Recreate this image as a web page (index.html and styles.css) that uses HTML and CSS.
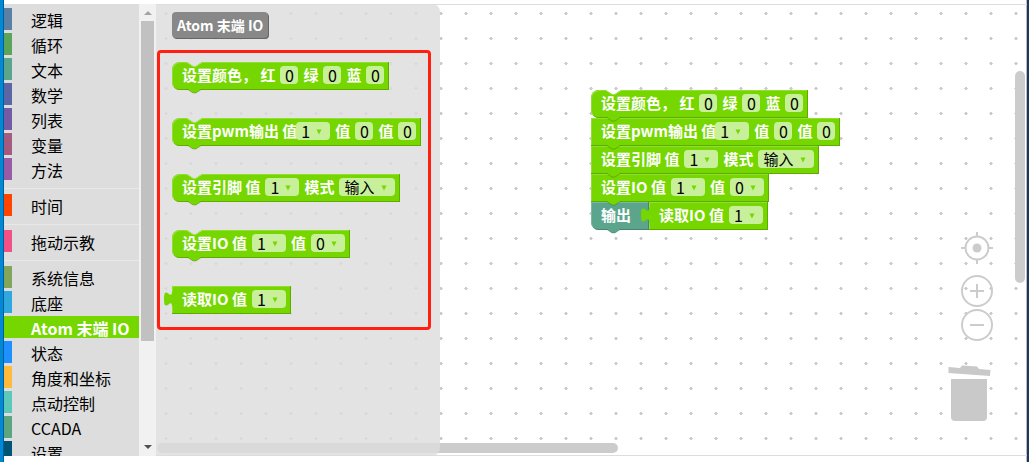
FILE: index.html
```html
<!DOCTYPE html>
<html lang="zh-CN">
<head>
<meta charset="utf-8">
<title>Atom 末端 IO</title>
<link rel="stylesheet" href="styles.css">
</head>
<body>
<svg class="defs" aria-hidden="true">
  <symbol id="notch" viewBox="0 0 16 5"><path class="notch-fill" d="M0 0H15L9 4H6Z"/><path class="notch-line" d="M0 .5L6 4.5H9L15 .5"/></symbol>
  <symbol id="tab" viewBox="0 0 16 5"><path d="M0 0H15L9 4H6Z" fill="currentColor"/><path d="M0 0L6 4H9L15 0" fill="none" stroke="#000" stroke-opacity=".2"/></symbol>
  <symbol id="plug" viewBox="0 0 9 16"><path d="M9 15.500H8c0-10-8 8-8-7.500s8 2.500 8-7.500H9Z" fill="currentColor"/></symbol>
  <symbol id="caret" viewBox="0 0 6 6"><path d="M.5 .5H5.500L3 5.500Z" fill="currentColor"/></symbol>
</svg>
<div class="window">
  <nav class="toolbox" aria-label="工具箱">
    <div class="categories">
      <button class="category logic">逻辑</button>
      <button class="category loops">循环</button>
      <button class="category text">文本</button>
      <button class="category math">数学</button>
      <button class="category lists">列表</button>
      <button class="category variables">变量</button>
      <button class="category methods">方法</button>
      <hr class="separator">
      <button class="category time">时间</button>
      <hr class="separator">
      <button class="category teach">拖动示教</button>
      <hr class="separator">
      <button class="category system">系统信息</button>
      <button class="category base">底座</button>
      <button class="category selected">Atom 末端 IO</button>
      <button class="category state">状态</button>
      <button class="category angles">角度和坐标</button>
      <button class="category jog">点动控制</button>
      <button class="category ccada">CCADA</button>
      <button class="category settings">设置</button>
    </div>
    <div class="track">
      <svg class="arrow up" viewBox="0 0 8 4"><path d="M0 4H8L4 0Z" fill="currentColor"/></svg>
      <div class="thumb"></div>
      <svg class="arrow" viewBox="0 0 8 4"><path d="M0 0H8L4 4Z" fill="currentColor"/></svg>
    </div>
  </nav>
  <main class="workspace">
    <svg class="grid" aria-hidden="true">
      <defs><pattern id="dots" width="25" height="25" patternUnits="userSpaceOnUse">
        <path d="M8 8h4v1h-4z" fill="#d4d4d4"/><path d="M9 7h2v3h-2z" fill="#ccc"/>
      </pattern></defs>
      <rect width="100%" height="100%" fill="url(#dots)"/>
    </svg>
    <div class="scroll-x"></div>
    <div class="scroll-y"></div>

    <section class="stack" aria-label="程序">
      <div class="block first">
        <svg class="notch"><use href="#notch"/></svg>
        <span class="label">设置颜色， 红</span><input class="field" aria-label="红" value="0">
        <span class="label">绿</span><input class="field" aria-label="绿" value="0">
        <span class="label">蓝</span><input class="field" aria-label="蓝" value="0">
        <svg class="tab"><use href="#tab"/></svg>
      </div>
      <div class="block">
        <span class="label tight">设置pwm输出 值</span><span class="drop"><select aria-label="引脚"><option>1</option></select><svg class="caret"><use href="#caret"/></svg></span>
        <span class="label">值</span><input class="field" aria-label="值一" value="0">
        <span class="label">值</span><input class="field" aria-label="值二" value="0">
        <svg class="tab"><use href="#tab"/></svg>
      </div>
      <div class="block">
        <span class="label">设置引脚 值</span><span class="drop"><select aria-label="引脚"><option>1</option></select><svg class="caret"><use href="#caret"/></svg></span>
        <span class="label">模式</span><span class="drop wide"><select aria-label="模式"><option>输入</option></select><svg class="caret"><use href="#caret"/></svg></span>
        <svg class="tab"><use href="#tab"/></svg>
      </div>
      <div class="block">
        <span class="label">设置IO 值</span><span class="drop"><select aria-label="引脚"><option>1</option></select><svg class="caret"><use href="#caret"/></svg></span>
        <span class="label">值</span><span class="drop"><select aria-label="值"><option>0</option></select><svg class="caret"><use href="#caret"/></svg></span>
        <svg class="tab"><use href="#tab"/></svg>
      </div>
      <div class="joined">
        <div class="block print">
          <span class="label">输出</span>
          <svg class="tab"><use href="#tab"/></svg>
        </div>
        <div class="block value">
          <svg class="plug"><use href="#plug"/></svg>
          <span class="label">读取IO 值</span><span class="drop"><select aria-label="引脚"><option>1</option></select><svg class="caret"><use href="#caret"/></svg></span>
        </div>
      </div>
    </section>

    <section class="flyout" aria-label="Atom 末端 IO">
      <button class="heading">Atom 末端 IO</button>
      <div class="highlight">
        <div class="block first">
          <svg class="notch"><use href="#notch"/></svg>
          <span class="label">设置颜色， 红</span><input class="field" aria-label="红" value="0">
          <span class="label">绿</span><input class="field" aria-label="绿" value="0">
          <span class="label">蓝</span><input class="field" aria-label="蓝" value="0">
          <svg class="tab"><use href="#tab"/></svg>
        </div>
        <div class="block first">
          <svg class="notch"><use href="#notch"/></svg>
          <span class="label tight">设置pwm输出 值</span><span class="drop"><select aria-label="引脚"><option>1</option></select><svg class="caret"><use href="#caret"/></svg></span>
          <span class="label">值</span><input class="field" aria-label="值一" value="0">
          <span class="label">值</span><input class="field" aria-label="值二" value="0">
          <svg class="tab"><use href="#tab"/></svg>
        </div>
        <div class="block first">
          <svg class="notch"><use href="#notch"/></svg>
          <span class="label">设置引脚 值</span><span class="drop"><select aria-label="引脚"><option>1</option></select><svg class="caret"><use href="#caret"/></svg></span>
          <span class="label">模式</span><span class="drop wide"><select aria-label="模式"><option>输入</option></select><svg class="caret"><use href="#caret"/></svg></span>
          <svg class="tab"><use href="#tab"/></svg>
        </div>
        <div class="block first">
          <svg class="notch"><use href="#notch"/></svg>
          <span class="label">设置IO 值</span><span class="drop"><select aria-label="引脚"><option>1</option></select><svg class="caret"><use href="#caret"/></svg></span>
          <span class="label">值</span><span class="drop"><select aria-label="值"><option>0</option></select><svg class="caret"><use href="#caret"/></svg></span>
          <svg class="tab"><use href="#tab"/></svg>
        </div>
        <div class="block value">
          <svg class="plug"><use href="#plug"/></svg>
          <span class="label">读取IO 值</span><span class="drop"><select aria-label="引脚"><option>1</option></select><svg class="caret"><use href="#caret"/></svg></span>
        </div>
      </div>
    </section>

    <div class="controls">
      <button class="tool" aria-label="居中"><svg viewBox="0 0 32 32" width="32" height="32"><circle cx="16" cy="16" r="11.500"/><circle class="solid" cx="16" cy="16" r="4.500"/><path d="M16 0v5M16 27v5M0 16h5M27 16h5"/></svg></button>
      <button class="tool zoom-in" aria-label="放大"><svg viewBox="0 0 32 32" width="32" height="32"><circle cx="16" cy="16" r="15"/><path d="M9 16h14M16 9v14"/></svg></button>
      <button class="tool" aria-label="缩小"><svg viewBox="0 0 32 32" width="32" height="32"><circle cx="16" cy="16" r="15"/><path d="M9 16h14"/></svg></button>
    </div>
    <button class="trash" aria-label="删除"><svg viewBox="0 0 43 57" width="43" height="57"><path d="M.5 2L12 3l2-2.500 15 1 2 2.500 11.500 1-.5 6L.5 8Z"/><path d="M3 14H39V52q0 4-4 4H7q-4 0-4-4Z"/></svg></button>
  </main>
</div>
</body>
</html>
```
FILE: styles.css
```css
* { box-sizing: border-box; }
body {
  margin: 0;
  font-family: "Noto Sans CJK SC", "Noto Sans", sans-serif;
  font-size: 16px;
  background: #fff;
}
button, input, select { font: inherit; border: 0; margin: 0; padding: 0; }
.defs { position: absolute; width: 0; height: 0; }

.window {
  display: flex;
  height: 100vh;
  padding: 4px 0 6px;
  border-left: 3px solid #0089d6;
  border-right: 2px solid #1d3761;
  box-shadow: inset 1px 0 #075c91, inset -1px 0 #bbb;
}

/* Toolbox */
.toolbox {
  display: flex;
  flex: none;
  margin-left: 1px;
  background: #ddd;
  overflow: hidden;
}
.categories { width: 135px; padding-top: 4px; overflow: hidden; }
.category {
  display: block;
  width: 100%;
  height: 22px;
  margin-bottom: 3px;
  padding-left: 19px;
  border-left: 8px solid;
  background: none;
  line-height: 24px;
  text-align: left;
  white-space: nowrap;
  color: #000;
}
.separator { height: 1px; margin: 8px 0 5px; border: 0; background: #e8e8e8; }
.logic { border-left-color: #5b80a5; }
.loops { border-left-color: #5ba55b; }
.text { border-left-color: #5ba58c; }
.math { border-left-color: #5b67a5; }
.lists { border-left-color: #745ba5; }
.variables { border-left-color: #a55b80; }
.methods { border-left-color: #995ba5; }
.time { border-left-color: #ff4500; }
.teach { border-left-color: #f15185; }
.system { border-left-color: #80a55b; }
.base { border-left-color: #2fa8df; }
.state { border-left-color: #1e90ff; }
.angles { border-left-color: #ffb93d; }
.jog { border-left-color: #5bc8b9; }
.ccada { border-left-color: #5ba580; }
.settings { border-left-color: #005475; }
.selected { border-left-color: #76d700; background: #76d700; color: #fff; font-weight: 700; }

.track {
  display: flex;
  flex-direction: column;
  align-items: center;
  width: 17px;
  padding: 7px 0;
  background: #f1f1f1;
}
.thumb { width: 13px; height: 73%; margin: 6px 0 auto; background: #c1c1c1; }
.arrow { width: 8px; height: 4px; color: #505050; }
.arrow.up { color: #a3a3a3; }

/* Workspace */
.workspace {
  position: relative;
  flex: 1;
  border: 1px solid #ddd;
  border-width: 1px 0;
}
.grid { position: absolute; top: 0; left: 0; width: 100%; height: 100%; }
.scroll-x, .scroll-y { position: absolute; border-radius: 5px; background: #ccc; }
.scroll-x { left: 1px; bottom: 2px; width: 461px; height: 10px; }
.scroll-y { right: 2px; top: 66px; width: 10px; height: 212px; }

/* Blocks */
.block {
  position: relative;
  display: flex;
  align-items: center;
  gap: 5px;
  width: max-content;
  height: 28px;
  padding: 0 5px 2px 10px;
  color: #76d700;
  background: currentColor;
  box-shadow: inset -1px -1px #5eac00, inset 1px 1px #91df33;
}
.first { border-radius: 8px 0 0 8px; }
.label {
  color: #fff;
  font-size: 15px;
  font-weight: 700;
  line-height: 26px;
  white-space: pre;
}
.tight { margin-right: -6px; }
.notch, .tab { position: absolute; left: 15px; width: 16px; height: 5px; }
.notch { top: 0; color: #fff; }
.tab { top: 27px; z-index: 1; }
.notch-fill { fill: var(--canvas, #fff); }
.notch-line { fill: none; stroke: #9fe34d; }
.plug { position: absolute; left: -8px; top: 5px; width: 9px; height: 16px; }
.field, .drop { height: 18px; border-radius: 4px; background: #c8f09a; color: #000; }
.field { width: 18px; text-align: center; }
.drop { position: relative; width: 34px; color: #76d700; }
.wide { width: 56px; }
.drop select {
  display: block;
  width: 100%;
  height: 18px;
  padding-left: 5px;
  appearance: none;
  background: none;
  color: #000;
  line-height: 18px;
}
.wide select { font-size: 15px; }
.caret { position: absolute; right: 8px; top: 7px; width: 6px; height: 6px; pointer-events: none; }
.stack { position: absolute; left: 435px; top: 85px; }
.joined { display: flex; }
.print {
  padding: 0 18px 2px 10px;
  color: #5ba58c;
  border-radius: 0 0 0 8px;
  box-shadow: inset -1px -1px #49846f, inset 1px 1px #7cb7a3;
}

/* Flyout */
.flyout {
  --canvas: #e3e3e3;
  position: absolute;
  left: 0;
  top: -1px;
  bottom: -1px;
  width: 284px;
  padding: 8px 9px 0 1px;
  border-radius: 0 8px 8px 0;
  background: rgba(221, 221, 221, .82);
}
.heading {
  display: block;
  height: 26px;
  margin: 0 0 12px 15px;
  padding: 0 5px;
  border-radius: 4px;
  background: #888;
  box-shadow: 1px 1px #666;
  color: #fff;
  font-size: 14px;
  font-weight: 700;
  line-height: 26px;
}
.highlight {
  display: flex;
  flex-direction: column;
  gap: 28px;
  padding: 9px 7px 13px 12px;
  border: 3px solid #ff2012;
  border-radius: 4px;
}

/* Canvas controls */
.controls {
  position: absolute;
  right: 34px;
  bottom: 114px;
  display: flex;
  flex-direction: column;
  gap: 2px;
}
.tool, .trash { display: block; background: none; }
.tool svg, .trash svg { display: block; }
.tool svg { fill: none; stroke: #ccc; stroke-width: 2; }
.tool .solid { fill: #ccc; stroke: none; }
.zoom-in { margin-top: 9px; }
.trash { position: absolute; right: 36px; bottom: 33px; }
.trash svg { fill: #c9c9c9; }
```
